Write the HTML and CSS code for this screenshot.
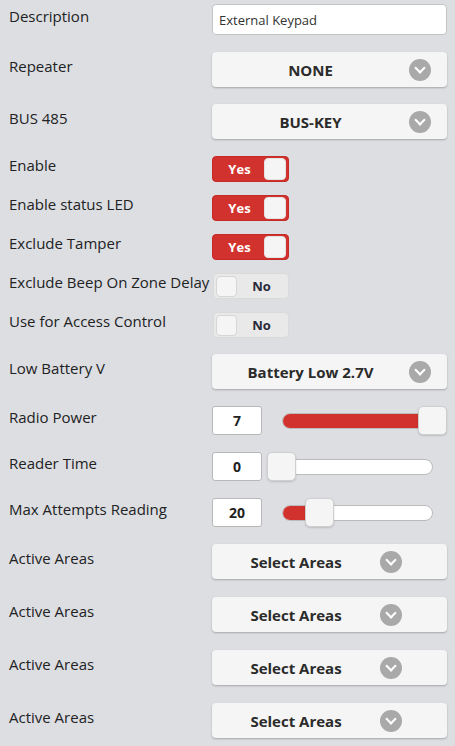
FILE: index.html
```html
<!DOCTYPE html>
<html lang="en">
<head>
    <meta charset="UTF-8">
    <meta name="viewport" content="width=device-width, initial-scale=1.0">
    <title>Device Settings</title>
    <link rel="stylesheet" href="styles.css">
</head>
<body>
    <div class="settings">
        <div class="row">
            <label class="label">Description</label>
            <input class="text-input" type="text" value="External Keypad">
        </div>
        <div class="row">
            <label class="label">Repeater</label>
            <div class="select"><span class="select-text">NONE</span><span class="chevron"></span></div>
        </div>
        <div class="row">
            <label class="label">BUS 485</label>
            <div class="select"><span class="select-text">BUS-KEY</span><span class="chevron"></span></div>
        </div>

        <div class="row toggle-row">
            <label class="label">Enable</label>
            <div class="toggle on"><span class="toggle-text">Yes</span><span class="knob"></span></div>
        </div>
        <div class="row toggle-row">
            <label class="label">Enable status LED</label>
            <div class="toggle on"><span class="toggle-text">Yes</span><span class="knob"></span></div>
        </div>
        <div class="row toggle-row">
            <label class="label">Exclude Tamper</label>
            <div class="toggle on"><span class="toggle-text">Yes</span><span class="knob"></span></div>
        </div>
        <div class="row toggle-row">
            <label class="label">Exclude Beep On Zone Delay</label>
            <div class="toggle off"><span class="knob"></span><span class="toggle-text">No</span></div>
        </div>
        <div class="row toggle-row last-toggle">
            <label class="label">Use for Access Control</label>
            <div class="toggle off"><span class="knob"></span><span class="toggle-text">No</span></div>
        </div>

        <div class="row">
            <label class="label">Low Battery V</label>
            <div class="select"><span class="select-text">Battery Low 2.7V</span><span class="chevron"></span></div>
        </div>

        <div class="row">
            <label class="label">Radio Power</label>
            <div class="range-field">
                <input class="num-input" type="text" value="7">
                <div class="slider">
                    <div class="track"><div class="fill" style="width: 100%"></div></div>
                    <div class="thumb" style="left: 100%"></div>
                </div>
            </div>
        </div>
        <div class="row">
            <label class="label">Reader Time</label>
            <div class="range-field">
                <input class="num-input" type="text" value="0">
                <div class="slider">
                    <div class="track"><div class="fill" style="width: 0%"></div></div>
                    <div class="thumb" style="left: 0%"></div>
                </div>
            </div>
        </div>
        <div class="row">
            <label class="label">Max Attempts Reading</label>
            <div class="range-field">
                <input class="num-input" type="text" value="20">
                <div class="slider">
                    <div class="track"><div class="fill" style="width: 25%"></div></div>
                    <div class="thumb" style="left: 25%"></div>
                </div>
            </div>
        </div>

        <div class="row areas-row">
            <label class="label">Active Areas</label>
            <div class="select areas"><span class="select-text">Select Areas</span><span class="chevron"></span></div>
        </div>
        <div class="row areas-row">
            <label class="label">Active Areas</label>
            <div class="select areas"><span class="select-text">Select Areas</span><span class="chevron"></span></div>
        </div>
        <div class="row areas-row">
            <label class="label">Active Areas</label>
            <div class="select areas"><span class="select-text">Select Areas</span><span class="chevron"></span></div>
        </div>
        <div class="row areas-row">
            <label class="label">Active Areas</label>
            <div class="select areas"><span class="select-text">Select Areas</span><span class="chevron"></span></div>
        </div>
    </div>
</body>
</html>
```

FILE: styles.css
```css
body {
    margin: 0;
    background: #dcdee2;
    font-family: 'Open Sans', 'Noto Sans', sans-serif;
    color: #222;
}
.settings {
    padding: 4px 8px 0 9px;
}
.row {
    display: flex;
    align-items: center;
    margin-bottom: 17px;
}
.toggle-row {
    margin-bottom: 13px;
}
.last-toggle {
    margin-bottom: 16px;
}
.areas-row {
    margin-bottom: 18px;
}
.label {
    width: 203px;
    flex-shrink: 0;
    font-size: 15px;
    line-height: 20px;
    padding-bottom: 6px;
    margin-top: -2px;
    white-space: nowrap;
}
.text-input {
    box-sizing: border-box;
    width: 235px;
    height: 31px;
    border: 1px solid #c4c4c4;
    border-radius: 4px;
    background: #fff;
    padding: 0 6px;
    font-family: inherit;
    font-size: 13px;
    color: #333;
}
.select {
    box-sizing: border-box;
    width: 235px;
    height: 35px;
    display: flex;
    align-items: center;
    padding-right: 16px;
    background: #f5f5f5;
    border-radius: 4px;
    box-shadow: 0 1px 2px rgba(0,0,0,0.25);
}
.select.areas {
    padding-right: 45px;
}
.select-text {
    flex: 1;
    text-align: center;
    font-weight: 700;
    font-size: 15px;
    color: #2b2b2b;
}
.chevron {
    width: 22px;
    height: 22px;
    border-radius: 50%;
    background: #a9a9a9;
    position: relative;
    flex-shrink: 0;
}
.chevron::after {
    content: '';
    position: absolute;
    left: 7px;
    top: 5px;
    width: 6px;
    height: 6px;
    border-right: 2.5px solid #fff;
    border-bottom: 2.5px solid #fff;
    transform: rotate(45deg);
}
.toggle {
    box-sizing: border-box;
    width: 77px;
    height: 26px;
    border-radius: 4px;
    display: flex;
    align-items: center;
    padding: 0 2px;
}
.toggle.on {
    background: #d2322d;
    border: 1px solid #c42a26;
}
.toggle.off {
    background: #e9e9e9;
    border: 1px solid #dadada;
    width: 76px;
    margin-left: 1px;
}
.toggle-text {
    flex: 1;
    text-align: center;
    font-weight: 700;
    font-size: 13px;
}
.toggle.on .toggle-text {
    color: #fff;
}
.toggle.off .toggle-text {
    color: #2a2a3a;
}
.knob {
    width: 22px;
    height: 22px;
    background: #f5f5f5;
    border-radius: 4px;
    border: 1px solid #d6d6d6;
    box-sizing: border-box;
}
.toggle.off .knob {
    width: 21px;
    height: 21px;
}
.toggle.on .knob {
    border-color: #e3e3e3;
}
.range-field {
    display: flex;
    align-items: center;
    width: 235px;
}
.num-input {
    box-sizing: border-box;
    width: 50px;
    height: 29px;
    border: 1px solid #b8b8b8;
    border-radius: 3px;
    background: #fff;
    text-align: center;
    font-family: inherit;
    font-weight: 700;
    font-size: 14px;
    color: #222;
    padding: 0;
}
.slider {
    position: relative;
    margin-left: 20px;
    width: 151px;
    height: 29px;
    display: flex;
    align-items: center;
}
.track {
    box-sizing: border-box;
    width: 100%;
    height: 16px;
    background: #fff;
    border: 1px solid #bbb;
    border-radius: 8px;
    overflow: hidden;
}
.fill {
    height: 100%;
    background: #d2322d;
}
.thumb {
    position: absolute;
    top: 0;
    width: 29px;
    height: 29px;
    margin-left: -15px;
    box-sizing: border-box;
    background: #f5f5f5;
    border: 1px solid #cfcfcf;
    border-radius: 5px;
    box-shadow: 0 1px 2px rgba(0,0,0,0.15);
}
```
